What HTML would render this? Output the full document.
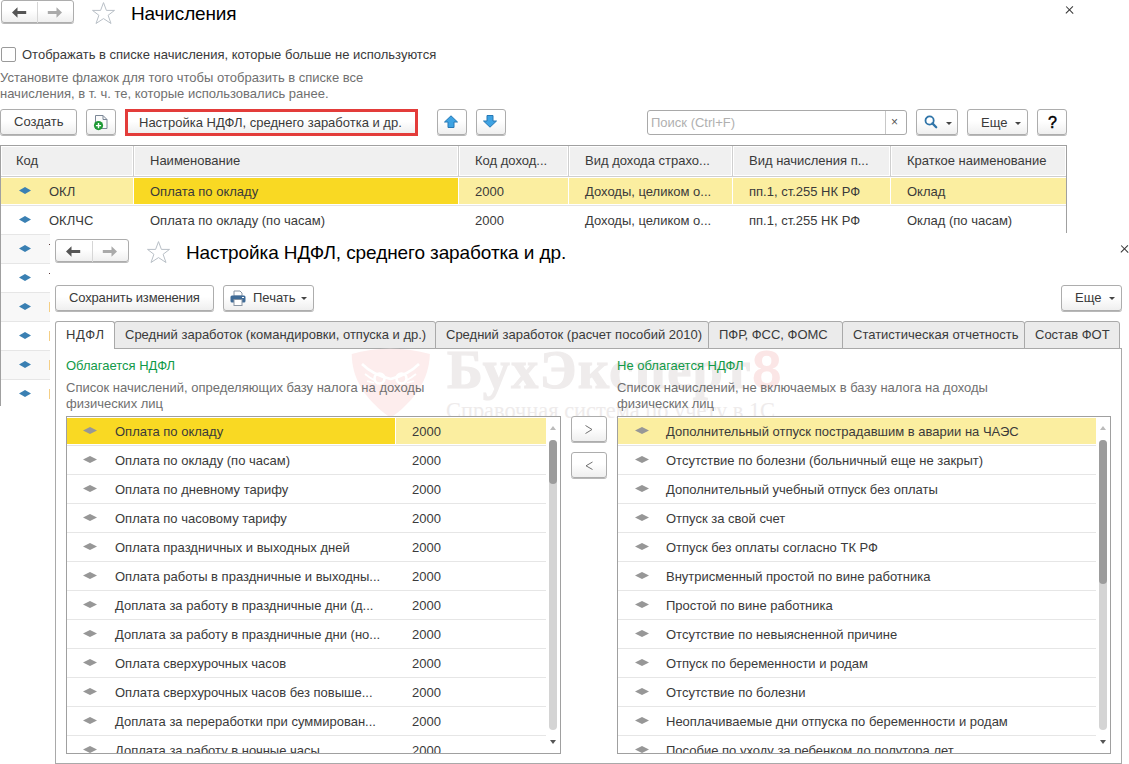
<!DOCTYPE html>
<html><head><meta charset="utf-8">
<style>
*{box-sizing:border-box;margin:0;padding:0}
html,body{width:1129px;height:764px;overflow:hidden;background:#fff}
body{position:relative;font-family:"Liberation Sans",sans-serif;font-size:13px;color:#3a3a3a}
.a{position:absolute}
.t{position:absolute;white-space:nowrap;line-height:16px}
.g{color:#707070}
.btn{position:absolute;border:1px solid #adadad;border-radius:3px;background:linear-gradient(#fff 0%,#fff 45%,#efefef 100%);box-shadow:0 1px 0 rgba(0,0,0,.28)}
.x{position:absolute;width:9px;height:9px}
.x:before,.x:after{content:"";position:absolute;left:3.85px;top:-0.3px;width:1.3px;height:9.6px;background:#333;transform:rotate(45deg)}
.x:after{transform:rotate(-45deg)}
.tri{position:absolute;width:0;height:0;border-left:3px solid transparent;border-right:3px solid transparent;border-top:3px solid #444}
.dia{position:absolute;width:12px;height:7px}
.gd{position:absolute;width:14px;height:7px}
.hl{position:absolute;height:1px;background:#e6e6e6}
</style></head><body>
<div class="btn" style="left:1px;top:0px;width:73px;height:23px;"></div>
<div class="a" style="left:37px;top:2px;width:1px;height:21px;background:#d6d6d6"></div>
<svg class="a" style="left:12px;top:7px" width="15" height="11" viewBox="0 0 15 11"><path d="M0 5.5 L5.5 0.3 V3.9 H14.2 V7.1 H5.5 V10.7 Z" fill="#555"/></svg>
<svg class="a" style="left:47px;top:7px" width="15" height="11" viewBox="0 0 15 11"><path d="M15 5.5 L9.5 0.3 V3.9 H0.8 V7.1 H9.5 V10.7 Z" fill="#aaa"/></svg>
<svg class="a" style="left:91px;top:2px" width="25" height="22" viewBox="0 0 25 22"><path d="M12.5 0.6 L15.4 8.4 L23.5 8.4 L17.1 13.3 L20 21.5 L12.5 16.6 L5 21.5 L7.9 13.3 L1.5 8.4 L9.6 8.4 Z" fill="none" stroke="#b8bfc6" stroke-width="1"/></svg>
<div class="t " style="left:131px;top:3px;font-size:19px;line-height:22px;color:#000;letter-spacing:-0.15px">Начисления</div>
<div class="x" style="left:1065px;top:5px"></div>
<div class="a" style="left:1px;top:47px;width:15px;height:15px;border:1px solid #9a9a9a;border-radius:2px;background:#fff"></div>
<div class="t " style="left:22px;top:47px;">Отображать в списке начисления, которые больше не используются</div>
<div class="t g" style="left:0px;top:70px;">Установите флажок для того чтобы отобразить в списке все</div>
<div class="t g" style="left:0px;top:86px;">начисления, в т. ч. те, которые использовались ранее.</div>
<div class="btn" style="left:0px;top:109px;width:77px;height:26px;"></div>
<div class="t " style="left:14px;top:114px;">Создать</div>
<div class="btn" style="left:86px;top:109px;width:30px;height:26px;"></div>
<svg class="a" style="left:92px;top:113px" width="18" height="19" viewBox="0 0 18 19"><path d="M3.5 2.5 H11 L15 6.5 V15.5 H3.5 Z" fill="#fbfbfb" stroke="#7b8796"/><path d="M11 2.5 V6.5 H15" fill="none" stroke="#7b8796"/><circle cx="6.5" cy="12.6" r="4.6" fill="#1f9a36"/><path d="M6.5 10 V15.2 M3.9 12.6 H9.1" stroke="#fff" stroke-width="1.4"/></svg>
<div class="a" style="left:125px;top:109px;width:293px;height:27px;border:3px solid #e33c3a;background:linear-gradient(#fff 45%,#efefef)"></div>
<div class="t " style="left:139px;top:115px;">Настройка НДФЛ, среднего заработка и др.</div>
<div class="btn" style="left:437px;top:109px;width:30px;height:26px;"></div>
<svg class="a" style="left:443px;top:115px" width="16" height="14" viewBox="0 0 16 14"><path d="M8 0.8 L14.5 7 H11 V12.5 H5 V7 H1.5 Z" fill="#3ea3e3" stroke="#2778b5" stroke-width="1"/></svg>
<div class="btn" style="left:476px;top:109px;width:30px;height:26px;"></div>
<svg class="a" style="left:482px;top:114px" width="16" height="14" viewBox="0 0 16 14"><path d="M8 13.2 L14.5 7 H11 V1.5 H5 V7 H1.5 Z" fill="#3ea3e3" stroke="#2778b5" stroke-width="1"/></svg>
<div class="a" style="left:647px;top:110px;width:260px;height:25px;border:1px solid #a9a9a9;border-radius:3px;background:#fff"></div>
<div class="a" style="left:885px;top:111px;width:1px;height:23px;background:#c8c8c8"></div>
<div class="t " style="left:651px;top:115px;color:#b0b0b0">Поиск (Ctrl+F)</div>
<div class="t " style="left:891px;top:114px;font-size:12px;color:#555">×</div>
<div class="btn" style="left:916px;top:109px;width:42px;height:26px;"></div>
<svg class="a" style="left:924px;top:115px" width="14" height="14" viewBox="0 0 14 14"><circle cx="5.6" cy="5.5" r="4.1" fill="none" stroke="#2f74a8" stroke-width="1.8"/><path d="M8.4 8.4 L12.2 12.2" stroke="#2f74a8" stroke-width="2.3" stroke-linecap="round"/></svg>
<div class="tri" style="left:946px;top:122px"></div>
<div class="btn" style="left:967px;top:109px;width:61px;height:26px;"></div>
<div class="t " style="left:981px;top:115px;">Еще</div>
<div class="tri" style="left:1015px;top:122px"></div>
<div class="btn" style="left:1037px;top:109px;width:30px;height:26px;"></div>
<div class="t " style="left:1048px;top:115px;font-size:16px;color:#000;-webkit-text-stroke:0.5px #000">?</div>
<div class="a" style="left:0px;top:145px;width:1067px;height:1px;background:#a0a0a0"></div>
<div class="a" style="left:0px;top:145px;width:1px;height:261px;background:#a0a0a0"></div>
<div class="a" style="left:1066px;top:145px;width:1px;height:88px;background:#a0a0a0"></div>
<div class="a" style="left:1px;top:146px;width:132px;height:30px;background:#f0f0f0;border:1px solid #fff"></div>
<div class="a" style="left:134px;top:146px;width:324px;height:30px;background:#f0f0f0;border:1px solid #fff"></div>
<div class="a" style="left:459px;top:146px;width:109px;height:30px;background:#f0f0f0;border:1px solid #fff"></div>
<div class="a" style="left:569px;top:146px;width:163px;height:30px;background:#f0f0f0;border:1px solid #fff"></div>
<div class="a" style="left:733px;top:146px;width:157px;height:30px;background:#f0f0f0;border:1px solid #fff"></div>
<div class="a" style="left:891px;top:146px;width:175px;height:30px;background:#f0f0f0;border:1px solid #fff"></div>
<div class="a" style="left:133px;top:146px;width:1px;height:31px;background:#cfcfcf"></div>
<div class="a" style="left:458px;top:146px;width:1px;height:31px;background:#cfcfcf"></div>
<div class="a" style="left:568px;top:146px;width:1px;height:31px;background:#cfcfcf"></div>
<div class="a" style="left:732px;top:146px;width:1px;height:31px;background:#cfcfcf"></div>
<div class="a" style="left:890px;top:146px;width:1px;height:31px;background:#cfcfcf"></div>
<div class="a" style="left:1px;top:176px;width:1065px;height:1px;background:#cfcfcf"></div>
<div class="t " style="left:16px;top:153px;">Код</div>
<div class="t " style="left:150px;top:153px;">Наименование</div>
<div class="t " style="left:475px;top:153px;">Код доход...</div>
<div class="t " style="left:585px;top:153px;">Вид дохода страхо...</div>
<div class="t " style="left:749px;top:153px;">Вид начисления п...</div>
<div class="t " style="left:907px;top:153px;">Краткое наименование</div>
<div class="a" style="left:1px;top:178px;width:1065px;height:26px;background:#fbeea0"></div>
<div class="a" style="left:134px;top:178px;width:324px;height:26px;background:#f9d923"></div>
<div class="a" style="left:133px;top:178px;width:1px;height:26px;background:#fff"></div>
<div class="a" style="left:458px;top:178px;width:1px;height:26px;background:#fff"></div>
<div class="a" style="left:568px;top:178px;width:1px;height:26px;background:#fff"></div>
<div class="a" style="left:732px;top:178px;width:1px;height:26px;background:#fff"></div>
<div class="a" style="left:890px;top:178px;width:1px;height:26px;background:#fff"></div>
<div class="a" style="left:1px;top:205px;width:1065px;height:1px;background:#e4e4e4"></div>
<div class="a" style="left:1px;top:234px;width:1065px;height:1px;background:#e6e6e6"></div>
<svg class="dia" style="left:19px;top:187px" viewBox="0 0 12 7"><path d="M0 3.5 L6 0 L12 3.5 L6 7 Z" fill="#3a80b3"/></svg>
<div class="t " style="left:49px;top:184px;">ОКЛ</div>
<div class="t " style="left:150px;top:184px;">Оплата по окладу</div>
<div class="t " style="left:475px;top:184px;">2000</div>
<div class="t " style="left:585px;top:184px;">Доходы, целиком о...</div>
<div class="t " style="left:749px;top:184px;">пп.1, ст.255 НК РФ</div>
<div class="t " style="left:907px;top:184px;">Оклад</div>
<svg class="dia" style="left:19px;top:216px" viewBox="0 0 12 7"><path d="M0 3.5 L6 0 L12 3.5 L6 7 Z" fill="#3a80b3"/></svg>
<div class="t " style="left:49px;top:213px;">ОКЛЧС</div>
<div class="t " style="left:150px;top:213px;">Оплата по окладу (по часам)</div>
<div class="t " style="left:475px;top:213px;">2000</div>
<div class="t " style="left:585px;top:213px;">Доходы, целиком о...</div>
<div class="t " style="left:749px;top:213px;">пп.1, ст.255 НК РФ</div>
<div class="t " style="left:907px;top:213px;">Оклад (по часам)</div>
<div class="a" style="left:1px;top:235px;width:49px;height:28px;background:#f8f8f8"></div>
<div class="a" style="left:1px;top:234px;width:49px;height:1px;background:#e6e6e6"></div>
<svg class="dia" style="left:19px;top:245px" viewBox="0 0 12 7"><path d="M0 3.5 L6 0 L12 3.5 L6 7 Z" fill="#3a80b3"/></svg>
<div class="a" style="left:1px;top:263px;width:49px;height:1px;background:#e6e6e6"></div>
<svg class="dia" style="left:19px;top:274px" viewBox="0 0 12 7"><path d="M0 3.5 L6 0 L12 3.5 L6 7 Z" fill="#3a80b3"/></svg>
<div class="a" style="left:1px;top:293px;width:49px;height:28px;background:#f8f8f8"></div>
<div class="a" style="left:1px;top:292px;width:49px;height:1px;background:#e6e6e6"></div>
<svg class="dia" style="left:19px;top:303px" viewBox="0 0 12 7"><path d="M0 3.5 L6 0 L12 3.5 L6 7 Z" fill="#3a80b3"/></svg>
<div class="a" style="left:1px;top:321px;width:49px;height:1px;background:#e6e6e6"></div>
<svg class="dia" style="left:19px;top:332px" viewBox="0 0 12 7"><path d="M0 3.5 L6 0 L12 3.5 L6 7 Z" fill="#3a80b3"/></svg>
<div class="a" style="left:1px;top:351px;width:49px;height:28px;background:#f8f8f8"></div>
<div class="a" style="left:1px;top:350px;width:49px;height:1px;background:#e6e6e6"></div>
<svg class="dia" style="left:19px;top:361px" viewBox="0 0 12 7"><path d="M0 3.5 L6 0 L12 3.5 L6 7 Z" fill="#3a80b3"/></svg>
<div class="a" style="left:1px;top:379px;width:49px;height:1px;background:#e6e6e6"></div>
<svg class="dia" style="left:19px;top:390px" viewBox="0 0 12 7"><path d="M0 3.5 L6 0 L12 3.5 L6 7 Z" fill="#3a80b3"/></svg>
<div class="a" style="left:49px;top:244px;width:1px;height:1px;background:#5a3a3a"></div>
<div class="a" style="left:49px;top:273px;width:1px;height:1px;background:#5a3a3a"></div>
<div class="a" style="left:49px;top:302px;width:1px;height:10px;background:#f5cf85"></div>
<div class="a" style="left:49px;top:331px;width:1px;height:10px;background:#f5cf85"></div>
<div class="a" style="left:49px;top:360px;width:1px;height:10px;background:#f5cf85"></div>
<div class="a" style="left:49px;top:389px;width:1px;height:10px;background:#f5cf85"></div>
<div class="a" style="left:50px;top:234px;width:1079px;height:530px;background:#fff"></div>
<div class="btn" style="left:55px;top:239px;width:74px;height:23px;"></div>
<div class="a" style="left:92px;top:241px;width:1px;height:21px;background:#d6d6d6"></div>
<svg class="a" style="left:66px;top:246px" width="15" height="11" viewBox="0 0 15 11"><path d="M0 5.5 L5.5 0.3 V3.9 H14.2 V7.1 H5.5 V10.7 Z" fill="#555"/></svg>
<svg class="a" style="left:102px;top:246px" width="15" height="11" viewBox="0 0 15 11"><path d="M15 5.5 L9.5 0.3 V3.9 H0.8 V7.1 H9.5 V10.7 Z" fill="#aaa"/></svg>
<svg class="a" style="left:146px;top:241px" width="25" height="22" viewBox="0 0 25 22"><path d="M12.5 0.6 L15.4 8.4 L23.5 8.4 L17.1 13.3 L20 21.5 L12.5 16.6 L5 21.5 L7.9 13.3 L1.5 8.4 L9.6 8.4 Z" fill="none" stroke="#b8bfc6" stroke-width="1"/></svg>
<div class="t " style="left:186px;top:242px;font-size:19px;line-height:22px;color:#000;letter-spacing:-0.1px">Настройка НДФЛ, среднего заработка и др.</div>
<div class="x" style="left:1120px;top:244px"></div>
<div class="btn" style="left:55px;top:285px;width:159px;height:26px;"></div>
<div class="t " style="left:69px;top:290px;letter-spacing:-0.15px">Сохранить изменения</div>
<div class="btn" style="left:223px;top:285px;width:91px;height:26px;"></div>
<svg class="a" style="left:230px;top:290px" width="16" height="16" viewBox="0 0 16 16"><path d="M4 1 H10 L12 3 V6 H4 Z" fill="#fff" stroke="#8a96a4"/><rect x="0.5" y="5.5" width="15" height="7" rx="1.5" fill="#3f6b97"/><rect x="4" y="9.5" width="8" height="6" fill="#fff" stroke="#8a96a4"/><rect x="12" y="7" width="2" height="1" fill="#fff"/></svg>
<div class="t " style="left:253px;top:290px;">Печать</div>
<div class="tri" style="left:301px;top:297px"></div>
<div class="btn" style="left:1061px;top:285px;width:61px;height:26px;"></div>
<div class="t " style="left:1075px;top:290px;">Еще</div>
<div class="tri" style="left:1109px;top:297px"></div>
<div class="a" style="left:55px;top:348px;width:1067px;height:416px;border:1px solid #a9a9a9;border-bottom:1px solid #a9a9a9"></div>
<div class="a" style="left:114px;top:321px;width:322px;height:28px;background:#ebebeb;border:1px solid #a9a9a9;border-radius:3px 3px 0 0"></div>
<div class="t " style="left:125px;top:327px;">Средний заработок (командировки, отпуска и др.)</div>
<div class="a" style="left:435px;top:321px;width:274px;height:28px;background:#ebebeb;border:1px solid #a9a9a9;border-radius:3px 3px 0 0"></div>
<div class="t " style="left:446px;top:327px;">Средний заработок (расчет пособий 2010)</div>
<div class="a" style="left:708px;top:321px;width:135px;height:28px;background:#ebebeb;border:1px solid #a9a9a9;border-radius:3px 3px 0 0"></div>
<div class="t " style="left:719px;top:327px;">ПФР, ФСС, ФОМС</div>
<div class="a" style="left:842px;top:321px;width:183px;height:28px;background:#ebebeb;border:1px solid #a9a9a9;border-radius:3px 3px 0 0"></div>
<div class="t " style="left:853px;top:327px;">Статистическая отчетность</div>
<div class="a" style="left:1024px;top:321px;width:96px;height:28px;background:#ebebeb;border:1px solid #a9a9a9;border-radius:3px 3px 0 0"></div>
<div class="t " style="left:1035px;top:327px;">Состав ФОТ</div>
<div class="a" style="left:55px;top:321px;width:60px;height:28px;background:#fff;border:1px solid #a9a9a9;border-bottom:none;border-radius:3px 3px 0 0"></div>
<div class="t " style="left:66px;top:327px;letter-spacing:0.7px">НДФЛ</div>
<svg class="a" style="left:345px;top:345px" width="95" height="75" viewBox="0 0 95 75"><path d="M6.7 9 C30 2 60 2 84.9 9 C84 35 70 55 45.6 73 C21 55 7 35 6.7 9 Z" fill="#fdeded"/><g fill="none" stroke="#fff"><circle cx="34.5" cy="33.5" r="5" stroke-width="2.6"/><circle cx="56.5" cy="33.5" r="5" stroke-width="2.6"/><path d="M17 19 Q28 30 45.6 34 Q63 30 74 19" stroke-width="2.6"/><path d="M20 29 Q25 33 29 35 M22 36 Q26 37 29 38 M71 29 Q66 33 62 35 M69 36 Q65 37 62 38" stroke-width="1.8"/></g></svg>
<div class="t " style="left:447px;top:340px;font-family:'Liberation Serif',serif;font-weight:bold;font-size:54px;line-height:60px;color:#efecec;letter-spacing:1.5px;-webkit-text-stroke:1.2px #efecec">БухЭксперт</div>
<div class="t " style="left:752px;top:340px;font-weight:bold;font-size:53px;line-height:60px;color:#fbe6e6">8</div>
<div class="t " style="left:446px;top:396px;font-family:'Liberation Serif',serif;font-size:22.4px;line-height:30px;color:#eeebeb">Справочная система по учету в 1С</div>
<div class="t " style="left:66px;top:358px;color:#119a48">Облагается НДФЛ</div>
<div class="t g" style="left:66px;top:380px;">Список начислений, определяющих базу налога на доходы</div>
<div class="t g" style="left:66px;top:396px;">физических лиц</div>
<div class="t " style="left:617px;top:358px;color:#119a48">Не облагается НДФЛ</div>
<div class="t g" style="left:617px;top:380px;">Список начислений, не включаемых в базу налога на доходы</div>
<div class="t g" style="left:617px;top:396px;">физических лиц</div>
<div class="a" style="left:66px;top:416px;width:495px;height:338px;border:1px solid #a0a0a0;overflow:hidden;background:#fff">
<div class="a" style="left:0;top:1px;width:328px;height:26px;background:#f9d923"></div><div class="a" style="left:329px;top:1px;width:150px;height:26px;background:#fbeea0"></div><div class="a" style="left:0;top:28px;width:479px;height:1px;background:#e4e4e4"></div><svg class="gd" style="left:16px;top:10px" viewBox="0 0 14 7"><path d="M0 3.5 L7 0 L14 3.5 L7 7 Z" fill="#979797"/></svg>
<div class="t" style="left:48px;top:7px">Оплата по окладу</div><div class="t" style="left:345px;top:7px">2000</div>
<div class="a" style="left:0;top:57px;width:479px;height:1px;background:#e6e6e6"></div><svg class="gd" style="left:16px;top:39px" viewBox="0 0 14 7"><path d="M0 3.5 L7 0 L14 3.5 L7 7 Z" fill="#979797"/></svg>
<div class="t" style="left:48px;top:36px">Оплата по окладу (по часам)</div><div class="t" style="left:345px;top:36px">2000</div>
<div class="a" style="left:0;top:86px;width:479px;height:1px;background:#e6e6e6"></div><svg class="gd" style="left:16px;top:68px" viewBox="0 0 14 7"><path d="M0 3.5 L7 0 L14 3.5 L7 7 Z" fill="#979797"/></svg>
<div class="t" style="left:48px;top:65px">Оплата по дневному тарифу</div><div class="t" style="left:345px;top:65px">2000</div>
<div class="a" style="left:0;top:115px;width:479px;height:1px;background:#e6e6e6"></div><svg class="gd" style="left:16px;top:97px" viewBox="0 0 14 7"><path d="M0 3.5 L7 0 L14 3.5 L7 7 Z" fill="#979797"/></svg>
<div class="t" style="left:48px;top:94px">Оплата по часовому тарифу</div><div class="t" style="left:345px;top:94px">2000</div>
<div class="a" style="left:0;top:144px;width:479px;height:1px;background:#e6e6e6"></div><svg class="gd" style="left:16px;top:126px" viewBox="0 0 14 7"><path d="M0 3.5 L7 0 L14 3.5 L7 7 Z" fill="#979797"/></svg>
<div class="t" style="left:48px;top:123px">Оплата праздничных и выходных дней</div><div class="t" style="left:345px;top:123px">2000</div>
<div class="a" style="left:0;top:173px;width:479px;height:1px;background:#e6e6e6"></div><svg class="gd" style="left:16px;top:155px" viewBox="0 0 14 7"><path d="M0 3.5 L7 0 L14 3.5 L7 7 Z" fill="#979797"/></svg>
<div class="t" style="left:48px;top:152px">Оплата работы в праздничные и выходны...</div><div class="t" style="left:345px;top:152px">2000</div>
<div class="a" style="left:0;top:202px;width:479px;height:1px;background:#e6e6e6"></div><svg class="gd" style="left:16px;top:184px" viewBox="0 0 14 7"><path d="M0 3.5 L7 0 L14 3.5 L7 7 Z" fill="#979797"/></svg>
<div class="t" style="left:48px;top:181px">Доплата за работу в праздничные дни (д...</div><div class="t" style="left:345px;top:181px">2000</div>
<div class="a" style="left:0;top:231px;width:479px;height:1px;background:#e6e6e6"></div><svg class="gd" style="left:16px;top:213px" viewBox="0 0 14 7"><path d="M0 3.5 L7 0 L14 3.5 L7 7 Z" fill="#979797"/></svg>
<div class="t" style="left:48px;top:210px">Доплата за работу в праздничные дни (но...</div><div class="t" style="left:345px;top:210px">2000</div>
<div class="a" style="left:0;top:260px;width:479px;height:1px;background:#e6e6e6"></div><svg class="gd" style="left:16px;top:242px" viewBox="0 0 14 7"><path d="M0 3.5 L7 0 L14 3.5 L7 7 Z" fill="#979797"/></svg>
<div class="t" style="left:48px;top:239px">Оплата сверхурочных часов</div><div class="t" style="left:345px;top:239px">2000</div>
<div class="a" style="left:0;top:289px;width:479px;height:1px;background:#e6e6e6"></div><svg class="gd" style="left:16px;top:271px" viewBox="0 0 14 7"><path d="M0 3.5 L7 0 L14 3.5 L7 7 Z" fill="#979797"/></svg>
<div class="t" style="left:48px;top:268px">Оплата сверхурочных часов без повыше...</div><div class="t" style="left:345px;top:268px">2000</div>
<div class="a" style="left:0;top:318px;width:479px;height:1px;background:#e6e6e6"></div><svg class="gd" style="left:16px;top:300px" viewBox="0 0 14 7"><path d="M0 3.5 L7 0 L14 3.5 L7 7 Z" fill="#979797"/></svg>
<div class="t" style="left:48px;top:297px">Доплата за переработки при суммирован...</div><div class="t" style="left:345px;top:297px">2000</div>
<div class="a" style="left:0;top:347px;width:479px;height:1px;background:#e6e6e6"></div><svg class="gd" style="left:16px;top:329px" viewBox="0 0 14 7"><path d="M0 3.5 L7 0 L14 3.5 L7 7 Z" fill="#979797"/></svg>
<div class="t" style="left:48px;top:326px">Доплата за работу в ночные часы</div><div class="t" style="left:345px;top:326px">2000</div>
<div class="a" style="left:483px;top:9px;width:0;height:0;border-left:3px solid transparent;border-right:3px solid transparent;border-bottom:4px solid #bbb"></div><div class="a" style="left:482px;top:23px;width:8px;height:290px;border-radius:4px;background:#d4d4d4"></div><div class="a" style="left:482px;top:23px;width:8px;height:44px;border-radius:4px;background:#9c9c9c"></div><div class="a" style="left:483px;top:323px;width:0;height:0;border-left:3px solid transparent;border-right:3px solid transparent;border-top:4px solid #555"></div></div>
<div class="a" style="left:617px;top:416px;width:494px;height:338px;border:1px solid #a0a0a0;overflow:hidden;background:#fff">
<div class="a" style="left:0;top:1px;width:478px;height:26px;background:#fbeea0"></div><div class="a" style="left:0;top:28px;width:478px;height:1px;background:#e4e4e4"></div><svg class="gd" style="left:17px;top:10px" viewBox="0 0 14 7"><path d="M0 3.5 L7 0 L14 3.5 L7 7 Z" fill="#979797"/></svg>
<div class="t" style="left:48px;top:7px">Дополнительный отпуск пострадавшим в аварии на ЧАЭС</div>
<div class="a" style="left:0;top:57px;width:478px;height:1px;background:#e6e6e6"></div><svg class="gd" style="left:17px;top:39px" viewBox="0 0 14 7"><path d="M0 3.5 L7 0 L14 3.5 L7 7 Z" fill="#979797"/></svg>
<div class="t" style="left:48px;top:36px">Отсутствие по болезни (больничный еще не закрыт)</div>
<div class="a" style="left:0;top:86px;width:478px;height:1px;background:#e6e6e6"></div><svg class="gd" style="left:17px;top:68px" viewBox="0 0 14 7"><path d="M0 3.5 L7 0 L14 3.5 L7 7 Z" fill="#979797"/></svg>
<div class="t" style="left:48px;top:65px">Дополнительный учебный отпуск без оплаты</div>
<div class="a" style="left:0;top:115px;width:478px;height:1px;background:#e6e6e6"></div><svg class="gd" style="left:17px;top:97px" viewBox="0 0 14 7"><path d="M0 3.5 L7 0 L14 3.5 L7 7 Z" fill="#979797"/></svg>
<div class="t" style="left:48px;top:94px">Отпуск за свой счет</div>
<div class="a" style="left:0;top:144px;width:478px;height:1px;background:#e6e6e6"></div><svg class="gd" style="left:17px;top:126px" viewBox="0 0 14 7"><path d="M0 3.5 L7 0 L14 3.5 L7 7 Z" fill="#979797"/></svg>
<div class="t" style="left:48px;top:123px">Отпуск без оплаты согласно ТК РФ</div>
<div class="a" style="left:0;top:173px;width:478px;height:1px;background:#e6e6e6"></div><svg class="gd" style="left:17px;top:155px" viewBox="0 0 14 7"><path d="M0 3.5 L7 0 L14 3.5 L7 7 Z" fill="#979797"/></svg>
<div class="t" style="left:48px;top:152px">Внутрисменный простой по вине работника</div>
<div class="a" style="left:0;top:202px;width:478px;height:1px;background:#e6e6e6"></div><svg class="gd" style="left:17px;top:184px" viewBox="0 0 14 7"><path d="M0 3.5 L7 0 L14 3.5 L7 7 Z" fill="#979797"/></svg>
<div class="t" style="left:48px;top:181px">Простой по вине работника</div>
<div class="a" style="left:0;top:231px;width:478px;height:1px;background:#e6e6e6"></div><svg class="gd" style="left:17px;top:213px" viewBox="0 0 14 7"><path d="M0 3.5 L7 0 L14 3.5 L7 7 Z" fill="#979797"/></svg>
<div class="t" style="left:48px;top:210px">Отсутствие по невыясненной причине</div>
<div class="a" style="left:0;top:260px;width:478px;height:1px;background:#e6e6e6"></div><svg class="gd" style="left:17px;top:242px" viewBox="0 0 14 7"><path d="M0 3.5 L7 0 L14 3.5 L7 7 Z" fill="#979797"/></svg>
<div class="t" style="left:48px;top:239px">Отпуск по беременности и родам</div>
<div class="a" style="left:0;top:289px;width:478px;height:1px;background:#e6e6e6"></div><svg class="gd" style="left:17px;top:271px" viewBox="0 0 14 7"><path d="M0 3.5 L7 0 L14 3.5 L7 7 Z" fill="#979797"/></svg>
<div class="t" style="left:48px;top:268px">Отсутствие по болезни</div>
<div class="a" style="left:0;top:318px;width:478px;height:1px;background:#e6e6e6"></div><svg class="gd" style="left:17px;top:300px" viewBox="0 0 14 7"><path d="M0 3.5 L7 0 L14 3.5 L7 7 Z" fill="#979797"/></svg>
<div class="t" style="left:48px;top:297px">Неоплачиваемые дни отпуска по беременности и родам</div>
<div class="a" style="left:0;top:347px;width:478px;height:1px;background:#e6e6e6"></div><svg class="gd" style="left:17px;top:329px" viewBox="0 0 14 7"><path d="M0 3.5 L7 0 L14 3.5 L7 7 Z" fill="#979797"/></svg>
<div class="t" style="left:48px;top:326px">Пособие по уходу за ребенком до полутора лет</div>
<div class="a" style="left:482px;top:9px;width:0;height:0;border-left:3px solid transparent;border-right:3px solid transparent;border-bottom:4px solid #bbb"></div><div class="a" style="left:481px;top:23px;width:8px;height:290px;border-radius:4px;background:#d4d4d4"></div><div class="a" style="left:481px;top:23px;width:8px;height:144px;border-radius:4px;background:#9c9c9c"></div><div class="a" style="left:482px;top:323px;width:0;height:0;border-left:3px solid transparent;border-right:3px solid transparent;border-top:4px solid #555"></div></div>
<div class="btn" style="left:571px;top:416px;width:36px;height:26px;"></div>
<svg class="a" style="left:580px;top:420px" width="20" height="20"><polyline points="5.5,5.5 12,9.5 5.5,13.5" fill="none" stroke="#707070" stroke-width="1"/></svg>
<div class="btn" style="left:571px;top:452px;width:36px;height:26px;"></div>
<svg class="a" style="left:580px;top:456px" width="20" height="20"><polyline points="12.5,6 6,9.8 12.5,13.5" fill="none" stroke="#707070" stroke-width="1"/></svg>
</body></html>
